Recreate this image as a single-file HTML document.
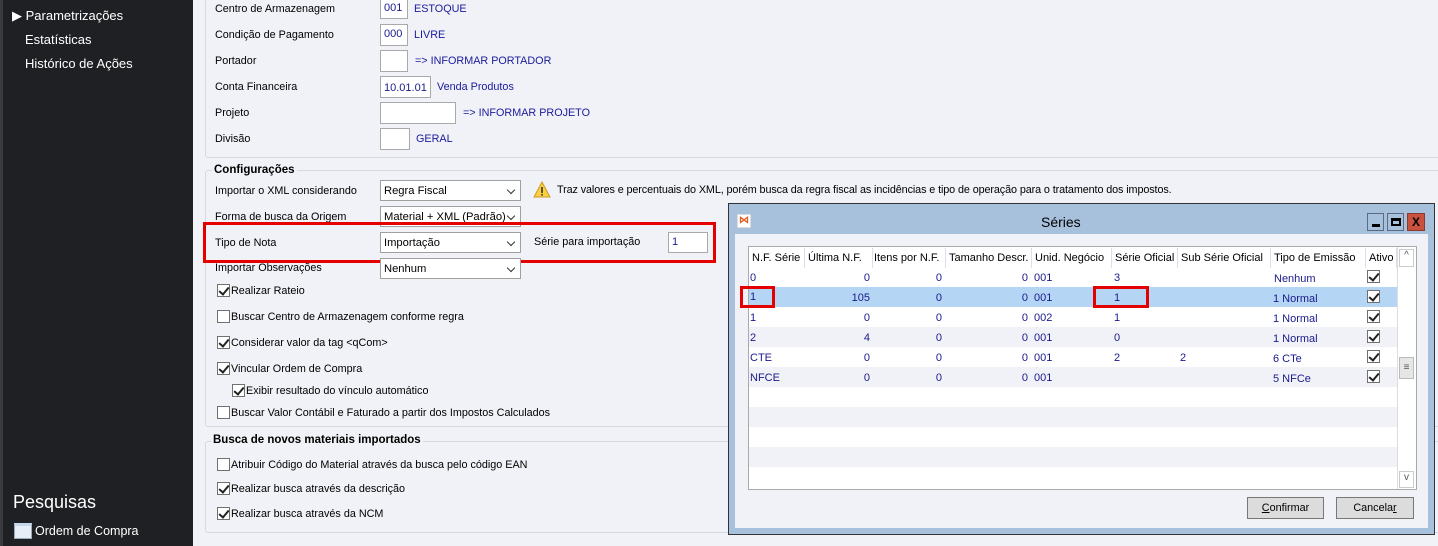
<!DOCTYPE html>
<html><head><meta charset="utf-8"><style>
*{box-sizing:border-box;margin:0;padding:0}
body{width:1438px;height:546px;overflow:hidden;background:#f1f2f7;font-family:"Liberation Sans",sans-serif;font-size:10.8px;color:#000;position:relative}
.a{position:absolute;white-space:nowrap}
.side{position:absolute;left:0;top:0;width:193px;height:546px;background:#1f2023;border-left:3px solid #3a3b3f}
.sw{color:#fff;font-size:13px}
.lbl{position:absolute;left:215px;line-height:14px}
.box{position:absolute;background:#fff;border:1px solid #a9a9a9;font-size:11px;padding:2px 3px;color:#1a1a8c;line-height:15px}
.blue{color:#1a1a9c}
.sel{position:absolute;left:380px;width:141px;height:21px;background:#fff;border:1px solid #a0a0a0;padding:3px 3px;line-height:14px;font-size:11.2px}
.sel:after{content:"";position:absolute;right:6px;top:6px;width:5px;height:5px;border-right:1.5px solid #333;border-bottom:1.5px solid #333;transform:rotate(45deg)}
.grp{position:absolute;border:1px solid #d4dbe0;border-radius:3px}
.cb{position:absolute;width:13px;height:13px;border:1px solid #707070;background:#fff}
.cb.k:after{content:"";position:absolute;left:3px;top:0px;width:4px;height:8px;border-right:2px solid #222;border-bottom:2px solid #222;transform:rotate(40deg)}
.red{position:absolute;border:3px solid #e50000}
.gt{position:absolute;font-size:11px;color:#1a1a8c;line-height:14px}
.hd{position:absolute;top:248px;height:20px;border-right:1px solid #dde;font-size:11px;line-height:20px;padding-left:3px;color:#000}
</style></head><body>
<div class="side"></div>
<div class="a sw" style="left:12px;top:8px">▶ Parametrizações</div>
<div class="a sw" style="left:25px;top:32px">Estatísticas</div>
<div class="a sw" style="left:25px;top:56px">Histórico de Ações</div>
<div class="a" style="left:13px;top:492px;color:#fff;font-size:18px">Pesquisas</div>
<div class="a" style="left:14px;top:523px;width:18px;height:16px;background:#e8eef7;border:1px solid #9ab;border-top:3px solid #c8d6ea"></div>
<div class="a sw" style="left:35px;top:524px;font-size:12.5px">Ordem de Compra</div>

<div class="grp" style="left:205px;top:-5px;width:1240px;height:163px"></div>
<div class="lbl" style="top:2px">Centro de Armazenagem</div>
<div class="box" style="left:380px;top:-2px;width:28px;height:21px">001</div><div class="a blue" style="left:414px;top:3px">ESTOQUE</div>
<div class="lbl" style="top:28px">Condição de Pagamento</div>
<div class="box" style="left:380px;top:24px;width:28px;height:22px">000</div><div class="a blue" style="left:414px;top:29px">LIVRE</div>
<div class="lbl" style="top:54px">Portador</div>
<div class="box" style="left:380px;top:50px;width:28px;height:22px"></div><div class="a blue" style="left:415px;top:55px">=&gt; INFORMAR PORTADOR</div>
<div class="lbl" style="top:80px">Conta Financeira</div>
<div class="box" style="left:380px;top:76px;width:51px;height:22px;padding-top:4px">10.01.01</div><div class="a blue" style="left:437px;top:81px">Venda Produtos</div>
<div class="lbl" style="top:106px">Projeto</div>
<div class="box" style="left:380px;top:102px;width:76px;height:22px"></div><div class="a blue" style="left:463px;top:107px">=&gt; INFORMAR PROJETO</div>
<div class="lbl" style="top:132px">Divisão</div>
<div class="box" style="left:380px;top:128px;width:30px;height:22px"></div><div class="a blue" style="left:416px;top:133px">GERAL</div>

<div class="grp" style="left:205px;top:170px;width:1240px;height:257px"></div>
<div class="a" style="left:212px;top:164px;font-weight:bold;background:#f1f2f7;padding:0 2px;font-size:11.5px">Configurações</div>
<div class="lbl" style="top:184px">Importar o XML considerando</div>
<div class="sel" style="top:180px">Regra Fiscal</div>
<svg class="a" style="left:533px;top:181px" width="18" height="17" viewBox="0 0 18 17"><path d="M9 1L17 16H1Z" fill="#f8d040" stroke="#d09a20"/><rect x="8.2" y="6" width="1.6" height="6" fill="#333"/><rect x="8.2" y="13" width="1.6" height="1.6" fill="#333"/></svg>
<div class="a" style="left:557px;top:184px;letter-spacing:-0.1px">Traz valores e percentuais do XML, porém busca da regra fiscal as incidências e tipo de operação para o tratamento dos impostos.</div>
<div class="lbl" style="top:210px">Forma de busca da Origem</div>
<div class="sel" style="top:206px">Material + XML (Padrão)</div>
<div class="lbl" style="top:236px">Tipo de Nota</div>
<div class="sel" style="top:232px">Importação</div>
<div class="a" style="left:534px;top:236px">Série para importação</div>
<div class="box" style="left:668px;top:232px;width:40px;height:21px">1</div>
<div class="red" style="left:203px;top:222px;width:513px;height:41px"></div>
<div class="lbl" style="top:261px">Importar Observações</div>
<div class="sel" style="top:258px">Nenhum</div>

<div class="cb k" style="left:217px;top:284px"></div><div class="a" style="left:231px;top:285px">Realizar Rateio</div>
<div class="cb" style="left:217px;top:310px"></div><div class="a" style="left:231px;top:311px">Buscar Centro de Armazenagem conforme regra</div>
<div class="cb k" style="left:217px;top:336px"></div><div class="a" style="left:231px;top:337px">Considerar valor da tag &lt;qCom&gt;</div>
<div class="cb k" style="left:217px;top:362px"></div><div class="a" style="left:231px;top:363px">Vincular Ordem de Compra</div>
<div class="cb k" style="left:232px;top:384px"></div><div class="a" style="left:246px;top:385px">Exibir resultado do vínculo automático</div>
<div class="cb" style="left:217px;top:406px"></div><div class="a" style="left:231px;top:407px">Buscar Valor Contábil e Faturado a partir dos Impostos Calculados</div>

<div class="grp" style="left:205px;top:441px;width:1240px;height:92px"></div>
<div class="a" style="left:211px;top:434px;font-weight:bold;background:#f1f2f7;padding:0 2px;font-size:11.5px">Busca de novos materiais importados</div>
<div class="cb" style="left:217px;top:458px"></div><div class="a" style="left:231px;top:459px">Atribuir Código do Material através da busca pelo código EAN</div>
<div class="cb k" style="left:217px;top:482px"></div><div class="a" style="left:231px;top:483px">Realizar busca através da descrição</div>
<div class="cb k" style="left:217px;top:507px"></div><div class="a" style="left:231px;top:508px">Realizar busca através da NCM</div>

<!-- dialog -->
<div class="a" style="left:728px;top:203px;width:707px;height:332px;background:#a7c0db;border:1px solid #333"></div>
<div class="a" style="left:735px;top:234px;width:693px;height:294px;background:#f1f2f7"></div>
<div class="a" style="left:737px;top:214px;width:14px;height:14px;background:#fff;border:1px solid #ddd;color:#e06020;font-size:10px;line-height:12px;text-align:center;font-weight:bold">⋈</div>
<div class="a" style="left:1041px;top:214px;font-size:14px">Séries</div>
<div class="a" style="left:1367px;top:213px;width:17px;height:18px;border:1px solid #5a6b80"><div style="position:absolute;left:4px;top:10px;width:8px;height:3px;background:#000"></div></div>
<div class="a" style="left:1387px;top:213px;width:17px;height:18px;border:1px solid #5a6b80"><div style="position:absolute;left:3px;top:4px;width:10px;height:8px;border:2px solid #000;border-top-width:3px"></div></div>
<div class="a" style="left:1407px;top:213px;width:18px;height:18px;background:#c9523f;border:1px solid #8a3a30;font-weight:bold;text-align:center;line-height:16px;font-size:12px">X</div>

<div class="a" style="left:748px;top:246px;width:669px;height:244px;background:#fff;border:1px solid #aaa"></div>
<div class="a" style="left:749px;top:287px;width:648px;height:20px;background:#b5d5f5"></div>
<div class="a" style="left:749px;top:327px;width:648px;height:20px;background:#f1f2f7"></div>
<div class="a" style="left:749px;top:367px;width:648px;height:20px;background:#f1f2f7"></div>
<div class="a" style="left:749px;top:407px;width:648px;height:20px;background:#f1f2f7"></div>
<div class="a" style="left:749px;top:447px;width:648px;height:20px;background:#f1f2f7"></div>
<div class="hd" style="left:749px;width:56px">N.F. Série</div>
<div class="hd" style="left:805px;width:68px">Última N.F.</div>
<div class="hd" style="left:873px;width:73px;padding-left:1px">Itens por N.F.</div>
<div class="hd" style="left:946px;width:86px">Tamanho Descr.</div>
<div class="hd" style="left:1032px;width:80px">Unid. Negócio</div>
<div class="hd" style="left:1112px;width:66px">Série Oficial</div>
<div class="hd" style="left:1178px;width:93px">Sub Série Oficial</div>
<div class="hd" style="left:1271px;width:95px">Tipo de Emissão</div>
<div class="hd" style="left:1366px;width:31px">Ativo</div>
<div class="a" style="left:1397px;top:247px;width:19px;height:242px;background:#fff;border-left:1px solid #ddd"></div>
<div class="a" style="left:1399px;top:249px;width:15px;height:18px;font-size:10px;text-align:center;color:#555;border:1px solid #ccc">^</div>
<div class="a" style="left:1399px;top:357px;width:15px;height:22px;background:#e6e6e6;border:1px solid #bbb;font-size:10px;text-align:center;line-height:20px;color:#555">≡</div>
<div class="a" style="left:1399px;top:471px;width:15px;height:17px;font-size:10px;text-align:center;color:#555;border:1px solid #ccc">v</div>

<div class="gt" style="left:750px;top:271px">0</div><div class="gt" style="left:750px;top:290px">1</div><div class="gt" style="left:750px;top:311px">1</div><div class="gt" style="left:750px;top:331px">2</div><div class="gt" style="left:750px;top:351px">CTE</div><div class="gt" style="left:750px;top:371px">NFCE</div>
<div class="gt" style="left:805px;width:65px;text-align:right;top:271px">0</div><div class="gt" style="left:805px;width:65px;text-align:right;top:291px">105</div><div class="gt" style="left:805px;width:65px;text-align:right;top:311px">0</div><div class="gt" style="left:805px;width:65px;text-align:right;top:331px">4</div><div class="gt" style="left:805px;width:65px;text-align:right;top:351px">0</div><div class="gt" style="left:805px;width:65px;text-align:right;top:371px">0</div>
<div class="gt" style="left:873px;width:69px;text-align:right;top:271px">0</div><div class="gt" style="left:873px;width:69px;text-align:right;top:291px">0</div><div class="gt" style="left:873px;width:69px;text-align:right;top:311px">0</div><div class="gt" style="left:873px;width:69px;text-align:right;top:331px">0</div><div class="gt" style="left:873px;width:69px;text-align:right;top:351px">0</div><div class="gt" style="left:873px;width:69px;text-align:right;top:371px">0</div>
<div class="gt" style="left:946px;width:82px;text-align:right;top:271px">0</div><div class="gt" style="left:946px;width:82px;text-align:right;top:291px">0</div><div class="gt" style="left:946px;width:82px;text-align:right;top:311px">0</div><div class="gt" style="left:946px;width:82px;text-align:right;top:331px">0</div><div class="gt" style="left:946px;width:82px;text-align:right;top:351px">0</div><div class="gt" style="left:946px;width:82px;text-align:right;top:371px">0</div>
<div class="gt" style="left:1034px;top:271px">001</div><div class="gt" style="left:1034px;top:291px">001</div><div class="gt" style="left:1034px;top:311px">002</div><div class="gt" style="left:1034px;top:331px">001</div><div class="gt" style="left:1034px;top:351px">001</div><div class="gt" style="left:1034px;top:371px">001</div>
<div class="gt" style="left:1114px;top:271px">3</div><div class="gt" style="left:1114px;top:291px">1</div><div class="gt" style="left:1114px;top:311px">1</div><div class="gt" style="left:1114px;top:331px">0</div><div class="gt" style="left:1114px;top:351px">2</div>
<div class="gt" style="left:1180px;top:351px">2</div>
<div class="gt" style="left:1274px;top:272px">Nenhum</div><div class="gt" style="left:1273px;top:292px">1 Normal</div><div class="gt" style="left:1273px;top:312px">1 Normal</div><div class="gt" style="left:1273px;top:332px">1 Normal</div><div class="gt" style="left:1273px;top:352px">6 CTe</div><div class="gt" style="left:1273px;top:372px">5 NFCe</div>
<div class="cb k" style="left:1367px;top:270px"></div><div class="cb k" style="left:1367px;top:290px"></div><div class="cb k" style="left:1367px;top:310px"></div><div class="cb k" style="left:1367px;top:330px"></div><div class="cb k" style="left:1367px;top:350px"></div><div class="cb k" style="left:1367px;top:370px"></div>
<div class="red" style="left:740px;top:286px;width:35px;height:22px"></div>
<div class="red" style="left:1093px;top:286px;width:56px;height:22px"></div>

<div class="a" style="left:1247px;top:497px;width:77px;height:22px;background:#dcdcdc;border:1px solid #777;text-align:center;line-height:20px"><u>C</u>onfirmar</div>
<div class="a" style="left:1336px;top:497px;width:78px;height:22px;background:#dcdcdc;border:1px solid #777;text-align:center;line-height:20px">Cancela<u>r</u></div>
</body></html>
